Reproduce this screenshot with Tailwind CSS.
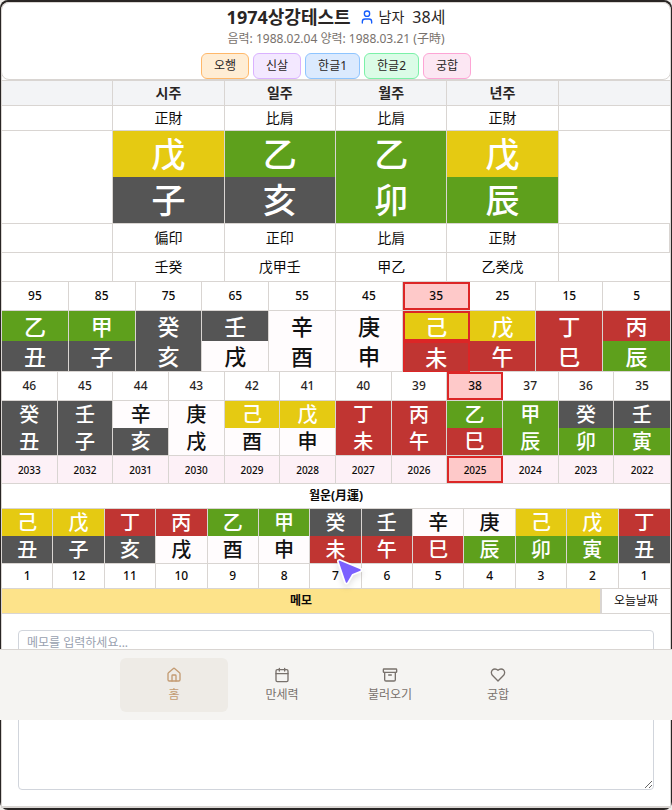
<!DOCTYPE html>
<html lang="ko">
<head>
<meta charset="utf-8">
<meta name="viewport" content="width=device-width, initial-scale=1">
<title>만세력</title>
<script src="https://cdn.jsdelivr.net/npm/@tailwindcss/browser@4"></script>
</head>
<body class="bg-[#f0eeeb] font-['Noto_Sans','Noto_Sans_CJK_KR',sans-serif] text-[#0c0a09]">
<div class="min-h-screen rounded-lg bg-[#292524] px-px pt-0.5 pb-0.5">
  <main class="rounded-t-lg border-x border-b-2 border-[#d9d5d2] bg-white">
    <header class="-mx-px flex flex-col items-center rounded-lg border border-[#d9d5d2] pt-0.5">
      <div class="mb-0.5 flex h-6 items-center gap-2 leading-6 text-[#292524]">
        <h1 class="text-lg leading-6 font-bold">1974상강테스트</h1>
        <div class="flex items-center gap-1 text-sm">
          <svg class="size-4 text-blue-600" viewBox="0 0 24 24" fill="none" stroke="currentColor" stroke-width="2" stroke-linecap="round" stroke-linejoin="round" aria-hidden="true"><circle cx="12" cy="7" r="4"/><path d="M19 21v-2a4 4 0 0 0-4-4H9a4 4 0 0 0-4 4v2"/></svg>
          <span>남자</span>
          <span class="ml-1 text-base leading-6">38세</span>
        </div>
      </div>
      <p class="h-5 text-xs leading-4 text-[#78716c]">음력: 1988.02.04 양력: 1988.03.21 (子時)</p>
      <div class="mt-0.5 flex gap-1 text-xs leading-4 text-[#292524]">
        <button type="button" class="h-[26px] rounded-md border border-orange-300 bg-orange-100 px-3">오행</button>
        <button type="button" class="h-[26px] rounded-md border border-purple-300 bg-purple-100 px-3">신살</button>
        <button type="button" class="h-[26px] rounded-md border border-blue-300 bg-blue-100 px-3">한글1</button>
        <button type="button" class="h-[26px] rounded-md border border-green-300 bg-green-100 px-3">한글2</button>
        <button type="button" class="h-[26px] rounded-md border border-pink-300 bg-pink-100 px-3">궁합</button>
      </div>
    </header>

    <table id="pillars" class="w-full table-fixed border-separate border-spacing-0 border-t border-[#d9d5d2] text-center text-sm leading-none"></table>
    <table id="decades" class="w-full table-fixed border-separate border-spacing-0 text-center text-xs leading-none"></table>
    <table id="years" class="w-full table-fixed border-separate border-spacing-0 text-center text-xs leading-none"></table>
    <h2 class="h-[25px] border-b border-[#d9d5d2] text-center text-xs leading-6 font-bold">월운(月運)</h2>
    <table id="months" class="w-full table-fixed border-separate border-spacing-0 text-center text-xs leading-none"></table>

    <div class="flex h-[25px] border-b border-[#d9d5d2] text-xs">
      <label for="memo" class="flex-1 border-r-2 border-[#d9d5d2] bg-[#fde38a] text-center leading-6 font-bold">메모</label>
      <button type="button" class="w-[68px] leading-6">오늘날짜</button>
    </div>
    <div class="p-4">
      <textarea id="memo" placeholder="메모를 입력하세요..." class="block h-40 w-full resize rounded border border-gray-300 bg-white px-2 py-1 text-xs leading-4 placeholder:text-gray-400"></textarea>
    </div>
  </main>
</div>

<nav class="fixed inset-x-0 bottom-[90px] flex h-[71px] justify-center border-t border-[#d9d5d2] bg-[#f5f4f2] py-2 text-xs leading-4 text-[#78716c]">
  <a href="#" class="flex w-[108px] flex-col items-center justify-center gap-1 rounded-md bg-[#eeebe6] text-[#c39b72]">
    <svg class="size-4" viewBox="0 0 24 24" fill="none" stroke="currentColor" stroke-width="2" stroke-linecap="round" stroke-linejoin="round" aria-hidden="true"><path d="M15 21v-8a1 1 0 0 0-1-1h-4a1 1 0 0 0-1 1v8"/><path d="M3 10a2 2 0 0 1 .709-1.528l7-5.999a2 2 0 0 1 2.582 0l7 5.999A2 2 0 0 1 21 10v9a2 2 0 0 1-2 2H5a2 2 0 0 1-2-2z"/></svg>
    홈</a>
  <a href="#" class="flex w-[108px] flex-col items-center justify-center gap-1">
    <svg class="size-4" viewBox="0 0 24 24" fill="none" stroke="currentColor" stroke-width="2" stroke-linecap="round" stroke-linejoin="round" aria-hidden="true"><path d="M8 2v4M16 2v4M3 10h18"/><rect width="18" height="18" x="3" y="4" rx="2"/></svg>
    만세력</a>
  <a href="#" class="flex w-[108px] flex-col items-center justify-center gap-1">
    <svg class="size-4" viewBox="0 0 24 24" fill="none" stroke="currentColor" stroke-width="2" stroke-linecap="round" stroke-linejoin="round" aria-hidden="true"><rect width="20" height="5" x="2" y="3" rx="1"/><path d="M4 8v11a2 2 0 0 0 2 2h12a2 2 0 0 0 2-2V8M10 12h4"/></svg>
    불러오기</a>
  <a href="#" class="flex w-[108px] flex-col items-center justify-center gap-1">
    <svg class="size-4" viewBox="0 0 24 24" fill="none" stroke="currentColor" stroke-width="2" stroke-linecap="round" stroke-linejoin="round" aria-hidden="true"><path d="M19 14c1.49-1.46 3-3.21 3-5.5A5.5 5.5 0 0 0 16.500 3c-1.760 0-3 .5-4.500 2-1.500-1.500-2.740-2-4.500-2A5.500 5.500 0 0 0 2 8.500c0 2.300 1.500 4.050 3 5.500l7 7Z"/></svg>
    궁합</a>
</nav>

<svg class="pointer-events-none absolute top-[555px] left-[333px] h-9 w-9 drop-shadow-md" viewBox="0 0 36 36" aria-hidden="true"><path d="M6.500 6.500 27 15l-8.500 3.500L13.500 27z" fill="#7b61ff" stroke="#fff" stroke-width="5" stroke-linejoin="round"/><path d="M6.500 6.500 27 15l-8.500 3.500L13.500 27z" fill="#7b61ff" stroke="#7b61ff" stroke-width="1.500" stroke-linejoin="round"/></svg>

<script>
const WOOD = 'bg-[#5ea01c] text-white', FIRE = 'bg-[#c03532] text-white', EARTH = 'bg-[#e5ca12] text-white';
const METAL = 'bg-[#fffcfd] text-[#111111]', WATER = 'bg-[#555555] text-white';
const element = {};
[['甲乙寅卯', WOOD], ['丙丁巳午', FIRE], ['戊己', EARTH], ['庚辛申酉', METAL], ['壬癸亥子', WATER]]
  .forEach(([chars, c]) => [...chars].forEach(ch => element[ch] = c));
// Earth branches take the colour of their season.
Object.assign(element, { 未: FIRE, 辰: WOOD, 戌: METAL, 丑: WATER });

const LINE = 'border-[#d9d5d2]';
const GLYPH = "font-['AR_PL_UKai_TW','KaiTi','Noto_Sans_CJK_KR',serif] font-medium px-0 pt-0 pb-0.5";
const row = cells => '<tr>' + cells.join('') + '</tr>';
const edge = (i, n) => i < n - 1 ? ' border-r' : '';
// A pink cell with a red frame marks the current period.
function texts(list, cls, mark = -1, tag = 'td') {
  return row(list.map((t, i) => i === mark
    ? `<${tag} class="border-b ${LINE} p-0 font-medium"><div class="flex h-7 items-center justify-center border-2 border-[#dc2626] bg-[#fec9c9]">${t}</div></${tag}>`
    : `<${tag} class="border-b p-0 ${LINE} ${cls}${edge(i, list.length)}">${t}</${tag}>`));
}
function glyphs(str, cls, mark = -1) {
  const list = [...str];
  return row(list.map((ch, i) => i === mark
    ? `<td class="${GLYPH} ${cls} ${element[ch]} border-2 border-[#dc2626]">${ch}</td>`
    : `<td class="${GLYPH} ${LINE} ${cls} ${element[ch]}${edge(i, list.length)}">${ch}</td>`));
}
const put = (id, html) => document.getElementById(id).innerHTML = html;

const big = (ch, cls) => `<td class="${GLYPH} ${LINE} border-r text-[34px] leading-none ${cls} ${element[ch]}">${ch}</td>`;
const side = cls => `<td rowspan="2" class="${LINE} border-b p-0 ${cls}"></td>`;
put('pillars',
  texts(['', '시주', '일주', '월주', '년주', ''], 'h-[25px] bg-gray-100 font-bold text-[#292524]', -1, 'th') +
  texts(['', '正財', '比肩', '比肩', '正財', ''], 'h-[25px]') +
  row([side('border-r'), ...[...'戊乙乙戊'].map(c => big(c, 'h-[46px]')), side('')]) +
  row([...'子亥卯辰'].map(c => big(c, 'h-[47px] border-b'))) +
  texts(['', '偏印', '正印', '比肩', '正財', ''], 'h-[29px] last:border-r') +
  texts(['', '壬癸', '戊甲壬', '甲乙', '乙癸戊', ''], 'h-[29px]'));
put('decades',
  texts([95, 85, 75, 65, 55, 45, 35, 25, 15, 5], 'h-[29px] font-medium', 6, 'th') +
  glyphs('乙甲癸壬辛庚己戊丁丙', 'h-[30px] text-[22px] leading-none', 6) +
  glyphs('丑子亥戌酉申未午巳辰', 'h-[31px] border-b text-[22px] leading-none', 6));
put('years',
  texts([46, 45, 44, 43, 42, 41, 40, 39, 38, 37, 36, 35], 'h-[29px] font-medium text-[#292524]', 8) +
  glyphs('癸壬辛庚己戊丁丙乙甲癸壬', 'h-[27px] text-xl leading-none') +
  glyphs('丑子亥戌酉申未午巳辰卯寅', 'h-[28px] border-b text-xl leading-none') +
  row([2033, 2032, 2031, 2030, 2029, 2028, 2027, 2026, 2025, 2024, 2023, 2022].map((y, i) => i === 8
    ? `<td class="border-b p-0 ${LINE} text-[10px] leading-none font-medium"><div class="flex h-[27px] items-center justify-center border-2 border-[#dc2626] bg-[#fec9c9]">${y}</div></td>`
    : `<td class="h-[28px] border-b p-0 ${LINE} bg-[#fdf1f7] text-[10px] leading-none font-medium${edge(i, 12)}">${y}</td>`)));
put('months',
  glyphs('己戊丁丙乙甲癸壬辛庚己戊丁', 'h-[27px] text-xl leading-none') +
  glyphs('丑子亥戌酉申未午巳辰卯寅丑', 'h-[28px] border-b text-xl leading-none') +
  texts([1, 12, 11, 10, 9, 8, 7, 6, 5, 4, 3, 2, 1], 'h-[25px] font-medium'));
</script>
</body>
</html>
